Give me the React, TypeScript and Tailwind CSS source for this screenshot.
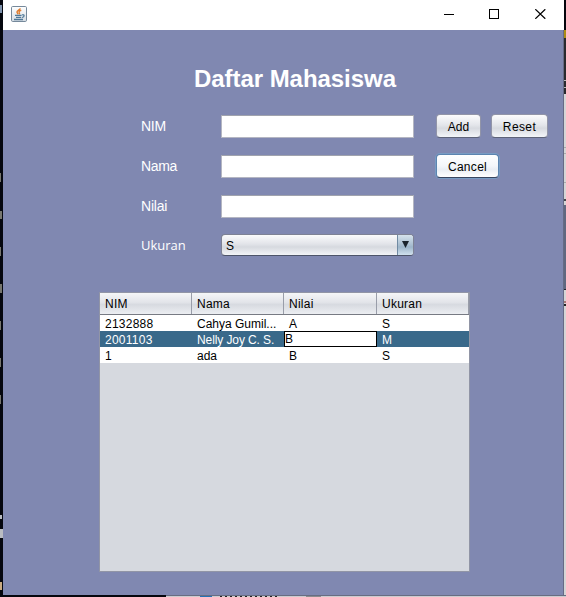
import React from "react";

const FONT = "font-['Liberation_Sans',Arial,sans-serif]";

const leftMarks = [
  { y: 5, h: 8, c: "#7f93ad", w: 2 },
  { y: 173, h: 9, c: "#77776f", w: 1 },
  { y: 211, h: 8, c: "#77776f", w: 2 },
  { y: 247, h: 9, c: "#77776f", w: 1 },
  { y: 284, h: 9, c: "#77776f", w: 2 },
  { y: 321, h: 9, c: "#77776f", w: 1 },
  { y: 358, h: 9, c: "#77776f", w: 1 },
  { y: 395, h: 9, c: "#77776f", w: 1 },
  { y: 515, h: 4, c: "#b9bcc2", w: 2 },
  { y: 529, h: 9, c: "#b9bcc2", w: 3 },
  { y: 582, h: 8, c: "#c9ab82", w: 2 },
];

function JavaIcon() {
  return (
    <svg className="block" width="16" height="16" viewBox="0 0 16 16">
      <defs>
        <linearGradient id="tile" x1="0" y1="0" x2="0" y2="1">
          <stop offset="0" stopColor="#ffffff" />
          <stop offset="1" stopColor="#d5dce3" />
        </linearGradient>
      </defs>
      <rect x="0.5" y="0.5" width="15" height="15" rx="1.2" fill="url(#tile)" stroke="#76899b" />
      <path d="M9.3 2.3C9.1 3.9 6 4.4 6 6c0 .9.8 1.3 1 2.3M10.3 4.3C8.7 4.8 7.8 5.4 8.1 6.3c.3.7.8 1.1.1 2" fill="none" stroke="#e07b2c" strokeWidth="1.4" />
      <path d="M4 9.4h6.6M5 11.4h5.2M3 13.5h9" fill="none" stroke="#4f7898" strokeWidth="1.3" />
      <path d="M11 8.9c2.7-.8 2.9 2 0 2.6" fill="none" stroke="#4f7898" strokeWidth="1.2" />
    </svg>
  );
}

function TitleBar() {
  return (
    <header className="flex h-[30px] w-[561px] shrink-0 items-start bg-white">
      <div className="mt-[6px] ml-[8px]"><JavaIcon /></div>
      <div className="mt-[9px] ml-auto mr-[18px] flex">
        <svg className="mr-[35px]" width="10" height="10" shapeRendering="crispEdges"><path d="M0 5.5h10" stroke="#000" /></svg>
        <svg className="mr-[36px]" width="10" height="10" shapeRendering="crispEdges"><rect x="0.5" y="0.5" width="9" height="9" fill="none" stroke="#000" /></svg>
        <svg width="11" height="10"><path d="M.3.2l10 9.6M10.3.2L.3 9.8" stroke="#000" strokeWidth="1.2" /></svg>
      </div>
    </header>
  );
}

function TextField() {
  return <input className="h-[23px] w-[193px] border border-[#b4b6c2] border-t-[#a0a3ad] bg-white outline-none" />;
}

function Label({ children, className = "" }: { children: string; className?: string }) {
  return <label className={"w-20 leading-4 text-white " + className}>{children}</label>;
}

function Button({ children, className }: { children: string; className: string }) {
  return (
    <button className={"flex items-center justify-center rounded-[4px] border pt-[2px] text-[12px] leading-none text-black " + className}>
      {children}
    </button>
  );
}

const NORMAL = "h-[24px] border-[#9295a8] border-b-[#5d6379] bg-[linear-gradient(#fcfcfd,#e4e6eb_45%,#d7dae0_60%,#f3f5f9)]";

function Form() {
  return (
    <div className="ml-[138px]">
      <div className="flex h-10 items-start">
        <Label className="mt-[3px] text-[14px] tracking-[-0.3px]">NIM</Label>
        <TextField />
        <div className="-mt-px ml-[22px] flex gap-[10px]">
          <Button className={"w-[45px] " + NORMAL}>Add</Button>
          <Button className={"w-[57px] tracking-[0.4px] " + NORMAL}>Reset</Button>
        </div>
      </div>
      <div className="flex h-10 items-start">
        <Label className="mt-[3px] text-[14px] tracking-[-0.35px]">Nama</Label>
        <TextField />
        <Button className="-mt-px ml-[22px] h-[24px] w-[63px] border-[#5c84b0] border-b-[#38465f] bg-[linear-gradient(#ffffff,#f3f6fa_50%,#e9eef4_65%,#ffffff)] tracking-[0.3px] shadow-[0_0_0_1px_#789bc3]">Cancel</Button>
      </div>
      <div className="flex h-10 items-start">
        <Label className="mt-[3px] text-[14px] tracking-[-0.2px]">Nilai</Label>
        <TextField />
      </div>
      <div className="-mt-px flex items-start">
        <Label className="mt-[3px] font-['Open_Sans',sans-serif] text-[13px]">Ukuran</Label>
        <div className="flex h-[22px] w-[193px] overflow-hidden rounded-[4px] border border-[#7e8294] border-b-[#4d5469] bg-[linear-gradient(#fbfbfc,#e2e4e9_45%,#d6d9df_60%,#f2f4f7)]">
          <span className="flex-1 pt-[1px] pl-[4px] text-[12px] leading-5 text-black">S</span>
          <span className="flex w-[16px] items-center justify-center border-l border-[#718ba3] bg-[linear-gradient(#d5e2ec,#a9bed0_50%,#9db5ca_60%,#d0e1ee)]">
            <svg className="-mt-px" width="7" height="7"><path d="M0 0h7L3.5 7z" fill="#1b242c" /></svg>
          </span>
        </div>
      </div>
    </div>
  );
}

const rows = [
  ["2132888", "Cahya Gumil...", "A", "S"],
  ["2001103", "Nelly Joy C. S.", "B", "M"],
  ["1", "ada", "B", "S"],
];

const COLS = "grid grid-cols-[92px_92px_93px_92px]";

function Table() {
  return (
    <div className="mt-[36px] ml-[96px] h-[280px] w-[371px] border border-[#9195a6] bg-[#d6d9df] text-[12px] text-black">
      <div className={COLS + " h-[22px] border-b border-[#777a83] bg-[linear-gradient(#f5f6f8,#e2e4e9_45%,#d7dae0_55%,#eceef2)]"}>
        {["NIM", "Nama", "Nilai", "Ukuran"].map((name) => (
          <div key={name} className="h-[21px] border-r border-[#999da9] pl-[5px] leading-[22px] tracking-[0.25px]">{name}</div>
        ))}
      </div>
      {rows.map((row, r) => (
        <div key={row[0]} className={COLS + " h-4 leading-4 " + (r === 1 ? "bg-[#39698a] text-white" : "bg-white")}>
          {row.map((cell, c) => (
            <div
              key={c}
              className={
                "whitespace-nowrap " +
                (r === 1 && c === 2
                  ? "h-4 border border-black bg-white leading-[14px] text-black"
                  : "pt-px pl-[5px] leading-[16px]") +
                (c === 0 ? " tracking-[0.25px]" : "") +
                (r === 1 && c === 1 ? " tracking-[-0.1px]" : "")
              }
            >
              {cell}
            </div>
          ))}
        </div>
      ))}
    </div>
  );
}

function RightEdge() {
  return (
    <div className="h-full w-[2px] bg-[#d5d5d6]">
      <div className="h-[30px] bg-[#05060d]" />
      <div className="h-[8px] bg-[#ac8c13]" />
      <div className="h-[42px] bg-[#292a2e]" />
      <div className="h-[8px] border-y border-[#bbb] bg-[#292a2e]" />
      <div className="h-[6px] bg-[#292a2e]" />
      <div className="h-[54px] border-b border-[#aaa]" />
      <div className="h-[6px] border-b border-[#aaa]" />
      <div className="h-[29px] border-b border-[#aaa]" />
      <div className="h-[18px] border-b-2 border-[#44464b]" />
      <div className="h-[4px]" />
      <div className="h-[85px] border-b border-[#22242d] bg-[#606880]" />
      <div className="mt-[11px] h-[2px] bg-[#a87878]" />
      <div className="mt-[1px] h-[2px] bg-[#242424]" />
    </div>
  );
}

export default function App() {
  return (
    <div className={"relative flex h-[597px] w-[566px] flex-col overflow-hidden bg-[#05070e] " + FONT}>
      <div className="flex h-[595px]">
        <div className="h-full w-[3px] bg-[#05070e]" />
        <main className="flex w-[561px] flex-col bg-[#8088b1]">
          <TitleBar />
          <div className="flex h-[565px] flex-col border-r border-[#666b85]">
            <h1 className="mt-[35px] ml-[191px] h-[50px] whitespace-nowrap text-[24px] leading-[28px] font-bold tracking-[-0.05px] text-white">Daftar Mahasiswa</h1>
            <Form />
            <Table />
          </div>
        </main>
        <RightEdge />
      </div>
      <div className="flex h-[2px]">
        <div className="w-[166px]" />
        <div className="flex flex-1 items-end border-t border-[#686d82] bg-[#cbccd0]">
          <i className="ml-[34px] h-px w-[12px] bg-[#2472b6]" />
          <i className="ml-[8px] h-px w-[58px] bg-[repeating-linear-gradient(90deg,#222_0px,#222_2px,#ccc_2px,#ccc_5px)]" />
          <i className="ml-[28px] h-px w-[15px] bg-[#8b8c8f]" />
        </div>
      </div>
      {leftMarks.map((m) => (
        <i key={m.y} className="absolute left-0" style={{ top: m.y, height: m.h, width: m.w, background: m.c }} />
      ))}
    </div>
  );
}
